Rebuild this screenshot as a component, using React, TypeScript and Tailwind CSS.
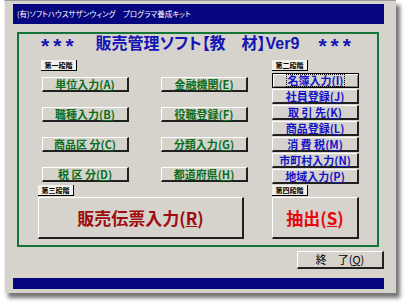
import React from 'react';

const jp = "font-['Noto_Sans_CJK_JP','Noto_Sans',sans-serif] [font-feature-settings:'palt']";

function Stage({ text }: { text: string }) {
  return (
    <div className="flex h-[11px] w-[36px] items-center justify-center border-b border-r border-b-black border-r-black bg-[#f3f1ec] text-[7px] leading-none font-bold text-black">
      {text}
    </div>
  );
}

function Btn({ label, keyChar, tone, isDefault }: { label: string; keyChar: string; tone: 'green' | 'blue'; isDefault?: boolean }) {
  const color = tone === 'green' ? 'text-[#0a6e1e] w-[87px] h-[15px]' : 'text-[#1212c8] w-[87px] h-[15px]';
  return (
    <div
      className={`flex items-center justify-center bg-[#d6d3cc] text-[11px] leading-none font-bold ${color} ${
        isDefault
          ? 'border border-black shadow-[inset_1px_1px_0_#fff,inset_-1px_-1px_0_#808080]'
          : 'border-t border-l border-b-2 border-r-2 border-t-white border-l-white border-b-[#202020] border-r-[#202020]'
      }`}
    >
      <span className={isDefault ? 'outline outline-1 outline-dotted outline-black px-[1px]' : ''}>
        {label}(<u>{keyChar}</u>)
      </span>
    </div>
  );
}

const leftButtons: [string, string, string, string][] = [
  ['単位入力', 'A', '金融機関', 'E'],
  ['職種入力', 'B', '役職登録', 'F'],
  ['商品区 分', 'C', '分類入力', 'G'],
  ['税 区 分', 'D', '都道府県', 'H'],
];

const rightButtons: [string, string][] = [
  ['名簿入力', 'I'],
  ['社員登録', 'J'],
  ['取 引 先', 'K'],
  ['商品登録', 'L'],
  ['消 費 税', 'M'],
  ['市町村入力', 'N'],
  ['地域入力', 'P'],
];

export default function App() {
  return (
    <div className={`h-[304px] w-[406px] overflow-hidden bg-white ${jp}`}>
      <div className="ml-[4px] h-[293px] w-[392px] border-t border-l border-t-[#9a9a9a] border-l-[#eeeeee] bg-[#d6d3cc] px-[8px] pt-[3px] shadow-[4px_5px_4px_rgba(0,0,0,0.55)]">
        <div className="flex h-[20px] w-[371px] items-center bg-[#06067e] pl-[4px] text-[7.5px] leading-none text-white">
          (有)ソフトハウスサザンウィング　プログラマ養成キット
        </div>

        <div className="mt-[8px] ml-[4px] flex h-[215px] w-[362px] flex-col border-2 border-[#137636]">
          <div className="flex h-[17px] items-center justify-center text-[16px] leading-none font-bold text-[#1414b4]">
            <span className="mt-[5px] font-['Liberation_Sans',sans-serif] text-[21px] tracking-[4px]">***</span>
            <span className="ml-[18px]">販売管理ソフト【教　材】<span className="font-['Liberation_Sans',sans-serif]">Ver9</span></span>
            <span className="mt-[5px] ml-[19px] font-['Liberation_Sans',sans-serif] text-[21px] tracking-[4px]">***</span>
          </div>

          <div className="mt-[9px] flex h-[125px] pl-[22px]">
            <div className="w-[231px]">
              <Stage text="第一段階" />
              <div className="mt-[6px] ml-[1px] grid grid-cols-[87px_87px] gap-x-[32px] gap-y-[15px]">
                {leftButtons.map(([a, ak, b, bk]) => (
                  <React.Fragment key={ak}>
                    <Btn label={a} keyChar={ak} tone="green" />
                    <Btn label={b} keyChar={bk} tone="green" />
                  </React.Fragment>
                ))}
              </div>
            </div>
            <div className="w-[87px]">
              <Stage text="第二段階" />
              <div className="mt-[2px] flex flex-col gap-[1px]">
                {rightButtons.map(([t, k], i) => (
                  <Btn key={k} label={t} keyChar={k} tone="blue" isDefault={i === 0} />
                ))}
              </div>
            </div>
          </div>

          <div className="flex pl-[19px]">
            <div className="w-[234px]">
              <Stage text="第三段階" />
              <div className="mt-[1px] flex h-[42px] w-[206px] items-center justify-center border-t border-l border-b-2 border-r-2 border-t-white border-l-white border-b-[#202020] border-r-[#202020] text-[17px] leading-none font-bold text-[#9e0c10]">
                販売伝票入力(<u>R</u>)
              </div>
            </div>
            <div className="w-[87px]">
              <Stage text="第四段階" />
              <div className="mt-[1px] flex h-[42px] w-[87px] items-center justify-center border-t border-l border-b-2 border-r-2 border-t-white border-l-white border-b-[#202020] border-r-[#202020] text-[17px] leading-none font-bold text-[#e4080c]">
                抽出(<u>S</u>)
              </div>
            </div>
          </div>
        </div>

        <div className="mt-[4px] flex justify-end pr-[4px]">
          <div className="flex h-[18px] w-[87px] items-center justify-center border-t border-l border-b-2 border-r-2 border-t-white border-l-white border-b-[#202020] border-r-[#202020] text-[11px] leading-none text-black">
            終　了(<u>Q</u>)
          </div>
        </div>

        <div className="mt-[9px] h-[11px] w-[371px] bg-[#06067e]" />
      </div>
    </div>
  );
}
